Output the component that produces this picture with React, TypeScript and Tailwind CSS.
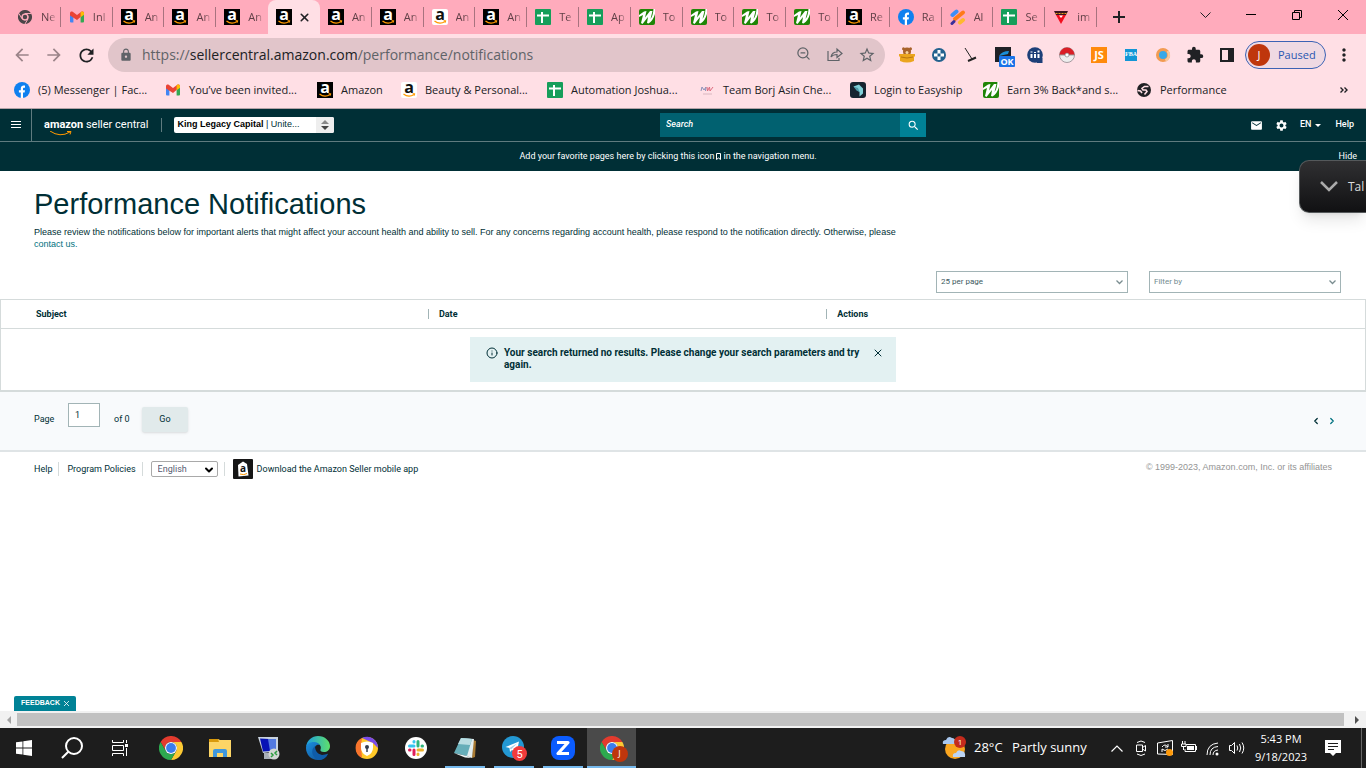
import type { ReactNode } from 'react';
import { MdLock, MdMail, MdSettings, MdRefresh, MdStarBorder, MdExtension, MdMoreVert, MdSearch, MdArrowBack, MdArrowForward } from 'react-icons/md';
import { X, ChevronDown, Info, ZoomOut } from 'lucide-react';

const AmazonIcon = ({ light = false }: { light?: boolean }) => (
  <svg viewBox="0 0 16 16" className="h-4 w-4 shrink-0">
    <rect width="16" height="16" rx={light ? 2 : 0} fill={light ? '#fff' : '#000'} />
    <text x="8" y="10.5" textAnchor="middle" fontSize="16" fontWeight="700" fontFamily="Open Sans, sans-serif" fill={light ? '#111' : '#fff'}>a</text>
    <path d="M2.5 12c3.2 2.6 7.4 2.6 10.6.5" fill="none" stroke="#f90" strokeWidth="1.3" />
    <path d="M11.6 11.7h2.2l-.6 2" fill="none" stroke="#f90" />
  </svg>
);

const ChromeIcon = ({ mono = false, className = 'h-4 w-4' }: { mono?: boolean; className?: string }) => (
  <svg viewBox="0 0 24 24" className={`${className} shrink-0`}>
    <path d="M1.6 6A12 12 0 0 1 22.4 6H12A6 6 0 0 0 6.8 15Z" fill={mono ? '#4b4548' : '#e33b2e'} />
    <path d="M22.4 6A12 12 0 0 1 12 24L17.2 15A6 6 0 0 0 12 6Z" fill={mono ? '#4b4548' : '#fcc934'} />
    <path d="M12 24A12 12 0 0 1 1.6 6L6.8 15A6 6 0 0 0 17.2 15Z" fill={mono ? '#4b4548' : '#2da94f'} />
    {mono && <path d="M12 6h10.4M6.8 15L1.6 6M17.2 15L12 24" stroke="#ffabbc" strokeWidth="1.6" />}
    <circle cx="12" cy="12" r="6" fill={mono ? '#ffabbc' : '#fff'} />
    <circle cx="12" cy="12" r={mono ? 3.8 : 4.9} fill={mono ? '#4b4548' : '#3b7ded'} />
  </svg>
);

const GmailIcon = () => (
  <svg viewBox="0 0 16 16" className="h-4 w-4 shrink-0">
    <path d="M1 4.2l3.4 2.6v6.7H2a1 1 0 0 1-1-1z" fill="#4285f4" />
    <path d="M15 4.2l-3.4 2.6v6.7H14a1 1 0 0 0 1-1z" fill="#34a853" />
    <path d="M1 6.5V4c0-1.5 1.7-2 2.7-1.2L8 6.1l4.3-3.3C13.3 2 15 2.5 15 4v1L8 11z" fill="#ea4335" />
    <path d="M11.6 3.3l.7-.5C13.3 2 15 2.5 15 4v1.7l-3.4 2.5z" fill="#fbbc04" />
  </svg>
);

const SheetIcon = () => (
  <svg viewBox="0 0 16 16" className="h-4 w-4 shrink-0">
    <rect width="16" height="16" rx="1" fill="#169e5a" />
    <path d="M7 3v11M2 6.5h12" stroke="#fff" strokeWidth="2" />
  </svg>
);

const LeafIcon = () => (
  <svg viewBox="0 0 16 16" className="h-4 w-4 shrink-0">
    <rect width="16" height="16" rx="2" fill="#1f8506" />
    <path d="M0 6L5 2.5 7.5 2 6 8.5 11 2h2.500L11.500 10Q14 7 14.500 0H16v5Q14 12 9.500 14.500L8 14 9 8 3.500 15 2 14 4 6 0 8z" fill="#fff" />
  </svg>
);

const FacebookIcon = () => (
  <svg viewBox="0 0 16 16" className="h-4 w-4 shrink-0">
    <circle cx="8" cy="8" r="8" fill="#0f80ef" />
    <path d="M6.8 16v-5.5H4.9V8.2h1.9V6.6c0-2 1.2-3 2.9-3 .7 0 1.3.1 1.3.1v2h-.9c-.9 0-1.1.6-1.1 1.1v1.4H11l-.4 2.3H9V16z" fill="#fff" />
  </svg>
);

const StripesIcon = () => (
  <svg viewBox="0 0 16 16" className="h-4 w-4 shrink-0" strokeLinecap="round">
    <path d="M2.5 6l4-3.5" stroke="#3e8ef7" strokeWidth="4" />
    <path d="M5 10l8-6.5" stroke="#ff7a1a" strokeWidth="4" />
    <path d="M10 13.5l3-2.5" stroke="#ffb82e" strokeWidth="4" />
    <path d="M2 14.5l2-2" stroke="#3a2d9a" strokeWidth="3" />
  </svg>
);

const ShieldVIcon = () => (
  <svg viewBox="0 0 16 16" className="h-4 w-4 shrink-0">
    <path d="M1 2h14l-2 4H3z" fill="#3b1620" />
    <path d="M2.5 4.5h11" stroke="#e6a11e" strokeDasharray="2 1" />
    <path d="M3 6h10L8 15z" fill="#f20d1d" />
    <path d="M6 6.5h4L8 9z" fill="#fff" />
  </svg>
);

const tabs: { icon: ReactNode; title: string; active?: boolean }[] = [
  { icon: <ChromeIcon mono className="h-3.5 w-3.5" />, title: 'Ne' },
  { icon: <GmailIcon />, title: 'Inl' },
  { icon: <AmazonIcon />, title: 'An' },
  { icon: <AmazonIcon />, title: 'An' },
  { icon: <AmazonIcon />, title: 'An' },
  { icon: <AmazonIcon />, title: '', active: true },
  { icon: <AmazonIcon />, title: 'An' },
  { icon: <AmazonIcon />, title: 'An' },
  { icon: <AmazonIcon light />, title: 'An' },
  { icon: <AmazonIcon />, title: 'An' },
  { icon: <SheetIcon />, title: 'Te' },
  { icon: <SheetIcon />, title: 'Ap' },
  { icon: <LeafIcon />, title: 'To' },
  { icon: <LeafIcon />, title: 'To' },
  { icon: <LeafIcon />, title: 'To' },
  { icon: <LeafIcon />, title: 'To' },
  { icon: <AmazonIcon />, title: 'Re' },
  { icon: <FacebookIcon />, title: 'Ra' },
  { icon: <StripesIcon />, title: 'Al' },
  { icon: <SheetIcon />, title: 'Se' },
  { icon: <ShieldVIcon />, title: 'im' },
];

const bookmarks: { icon: ReactNode; label: string; width: string }[] = [
  { icon: <FacebookIcon />, label: '(5) Messenger | Fac...', width: 'w-[151px]' },
  { icon: <GmailIcon />, label: 'You’ve been invited...', width: 'w-[152px]' },
  { icon: <AmazonIcon />, label: 'Amazon', width: 'w-[84px]' },
  { icon: <AmazonIcon light />, label: 'Beauty & Personal...', width: 'w-[146px]' },
  { icon: <SheetIcon />, label: 'Automation Joshua...', width: 'w-[152px]' },
  {
    icon: (
      <svg viewBox="0 0 16 16" className="h-4 w-4 shrink-0" fill="none">
        <path d="M2 9l1-4 2 3 2-3-.5 4" stroke="#8a90b8" />
        <path d="M8 5l.5 4 2-4 .5 4 3-4" stroke="#dc6b7d" />
        <path d="M4 12h9" stroke="#d9b7c0" />
      </svg>
    ),
    label: 'Team Borj Asin Che...',
    width: 'w-[151px]',
  },
  {
    icon: (
      <svg viewBox="0 0 16 16" className="h-4 w-4 shrink-0">
        <rect width="16" height="16" rx="3" fill="#162430" />
        <path d="M3.5 4.5L9 2.5l4 4v5l-3.5 3V10z" fill="#7fd0d8" />
        <path d="M3.5 4.5L8 6l1.5 4-3-1.5z" fill="#4e9aa8" />
      </svg>
    ),
    label: 'Login to Easyship',
    width: 'w-[133px]',
  },
  { icon: <LeafIcon />, label: 'Earn 3% Back*and s...', width: 'w-[153px]' },
  {
    icon: (
      <svg viewBox="0 0 16 16" className="h-4 w-4 shrink-0">
        <circle cx="8" cy="8" r="7" fill="#202124" />
        <path d="M12.5 4.5H8.5L6 6.5l1 1.5h3l1 1.5-2.5 3M1.5 8.5l3 .5 1.5 2" fill="none" stroke="#ffdfe5" strokeWidth="1.6" />
      </svg>
    ),
    label: 'Performance',
    width: 'w-[100px]',
  },
];

const extensions: { name: string; icon: ReactNode }[] = [
  {
    name: 'Coupons',
    icon: (
      <svg viewBox="0 0 16 16" className="h-4 w-4">
        <circle cx="8" cy="4.5" r="4" fill="#a8622a" />
        <circle cx="4.5" cy="1.8" r="1.5" fill="#a8622a" />
        <circle cx="11.5" cy="1.8" r="1.5" fill="#a8622a" />
        <path d="M0 7h16v2l-1 1v4q-7 3-14 0v-4L0 9z" fill="#eba51e" />
        <path d="M2 10q6 2 12 0" stroke="#b9760f" fill="none" />
        <circle cx="8" cy="5.5" r="1.5" fill="#f4d3a1" />
      </svg>
    ),
  },
  {
    name: 'Helper',
    icon: (
      <svg viewBox="0 0 16 16" className="h-4 w-4">
        <circle cx="8" cy="8" r="7" fill="#23628e" />
        <path d="M8 3v10M3 8h10" stroke="#fff" strokeWidth="3" />
        <rect x="6.5" y="6.5" width="3" height="3" fill="#23628e" />
      </svg>
    ),
  },
  {
    name: 'Broom',
    icon: (
      <svg viewBox="0 0 16 16" className="h-4 w-4" stroke="#222" fill="none">
        <path d="M2 1l7 11" />
        <path d="M5 14l8-3.5" strokeWidth="2" />
      </svg>
    ),
  },
  {
    name: 'Status',
    icon: (
      <svg viewBox="0 0 24 24" className="h-6 w-6">
        <rect x="4" y="4" width="16" height="15" fill="#1f2126" />
        <path d="M8 13q3-5 10-5l-1 3z" fill="#1a8fd8" />
        <rect x="8" y="13" width="16" height="11" rx="1" fill="#1a73e8" />
        <text x="16" y="22" textAnchor="middle" fontSize="9" fontWeight="700" fontFamily="Open Sans, sans-serif" fill="#fff">OK</text>
      </svg>
    ),
  },
  {
    name: 'Charts',
    icon: (
      <svg viewBox="0 0 16 16" className="h-4 w-4">
        <circle cx="8" cy="8" r="7.8" fill="#1d3f78" />
        <path d="M9 11h6.5v5H10z" fill="#1d3f78" />
        <path d="M4.500 7V11M8 7v4M11.5 7v4M4.5 4.5v1M8 5v1M11.5 3.5v2" stroke="#fff" strokeWidth="2" />
      </svg>
    ),
  },
  {
    name: 'Ball',
    icon: (
      <svg viewBox="0 0 16 16" className="h-4 w-4">
        <circle cx="8" cy="8" r="7.5" fill="#eee" stroke="#a79ba0" />
        <path d="M.5 8a7.5 7.5 0 0 1 15 0z" fill="#da1e26" />
        <path d="M.5 8h15" stroke="#999" />
        <circle cx="8" cy="8" r="2" fill="#fff" stroke="#777" strokeWidth=".6" />
      </svg>
    ),
  },
  {
    name: 'Scout',
    icon: <span className="flex h-4 w-4 items-center justify-center bg-[#ff8a0c] text-[11px] font-bold text-white">JS</span>,
  },
  {
    name: 'Calculator',
    icon: (
      <svg viewBox="0 0 12 12" className="h-3 w-3">
        <rect width="12" height="12" fill="#1296d6" />
        <text x="6" y="7" textAnchor="middle" fontSize="6" fontWeight="700" fontFamily="Liberation Serif, serif" fill="#fff">FBA</text>
      </svg>
    ),
  },
  {
    name: 'Ring',
    icon: (
      <svg viewBox="0 0 16 16" className="h-4 w-4">
        <circle cx="8" cy="8" r="5.5" fill="#36a8e8" stroke="#f29b52" strokeWidth="3" />
        <path d="M12.5 4a6 6 0 0 1-2 9.5" fill="none" stroke="#f7c79c" strokeWidth="2.5" />
      </svg>
    ),
  },
  { name: 'Extensions', icon: <MdExtension size={18} /> },
  {
    name: 'Side panel',
    icon: (
      <svg viewBox="0 0 16 16" className="h-4 w-4">
        <path d="M2 2h12v12H2z" fill="none" stroke="#202124" strokeWidth="2" />
        <path d="M9 2h5v12H9z" fill="#202124" />
      </svg>
    ),
  },
];

function TabStrip() {
  return (
    <div className="flex h-[34px] items-stretch bg-[#ffabbc]">
      <div className="ml-[9px] flex max-w-[1088px] flex-1">
        {tabs.map((tab, i) => (
          <div
            key={i}
            className={`flex min-w-0 flex-1 items-center pl-2 ${tab.active ? 'rounded-t-lg bg-[#ffdfe5]' : ''}`}
          >
            <span className="flex w-4 shrink-0 justify-center">{tab.icon}</span>
            {tab.active ? (
              <button aria-label="Close tab" className="ml-1.5 text-[#202124]">
                <X size={13} strokeWidth={3} />
              </button>
            ) : (
              <>
                <span className="ml-2 w-4 overflow-hidden text-[11px] whitespace-nowrap text-[#5f3f46] [mask-image:linear-gradient(to_right,black_50%,transparent)]">
                  {tab.title}
                </span>
                {i !== 4 && <span className="ml-auto h-5 w-px bg-[#a8737f]" />}
              </>
            )}
          </div>
        ))}
      </div>
      <button aria-label="New tab" className="flex w-[44px] items-center justify-center">
        <svg viewBox="0 0 12 12" className="h-3 w-3"><path d="M6 0v12M0 6h12" stroke="#202124" strokeWidth="2" /></svg>
      </button>
      <div className="ml-auto flex h-[29px] text-[#202124]">
        <button aria-label="Search tabs" className="flex w-[46px] items-center justify-center">
          <svg viewBox="0 0 11 6" className="h-1.5 w-[11px]" fill="none" stroke="#202124"><path d="M.5.5l5 5 5-5" /></svg>
        </button>
        <button aria-label="Minimize" className="flex w-[46px] items-center justify-center"><span className="h-px w-[10px] bg-black" /></button>
        <button aria-label="Restore" className="flex w-[46px] items-center justify-center">
          <svg viewBox="0 0 10 10" className="h-[10px] w-[10px]" fill="none" stroke="#000"><path d="M.5 2.5h7v7h-7zM2.5 2.5v-2h7v7h-2" /></svg>
        </button>
        <button aria-label="Close" className="flex w-[46px] items-center justify-center">
          <svg viewBox="0 0 10 10" className="h-[10px] w-[10px]" stroke="#000"><path d="M0 0l10 10M10 0L0 10" /></svg>
        </button>
      </div>
    </div>
  );
}

function Toolbar() {
  return (
    <div className="flex h-[42px] items-center bg-[#ffdfe5] pl-1.5 text-[#202124]">
      <button aria-label="Back" className="flex w-8 justify-center text-[#9b8489]"><MdArrowBack size={20} /></button>
      <button aria-label="Forward" className="flex w-8 justify-center text-[#9b8489]"><MdArrowForward size={20} /></button>
      <button aria-label="Reload" className="flex w-8 justify-center"><MdRefresh size={21} /></button>
      <div className="ml-1.5 flex h-[34px] flex-1 items-center rounded-full bg-[#e1c5ca] pl-[11px] text-[#5f6368]">
        <MdLock size={14} />
        <div className="ml-[9px] text-sm">
          https://<span className="text-[#202124]">sellercentral.amazon.com</span>/performance/notifications
        </div>
        <div className="ml-auto flex pr-0.5">
          <button aria-label="Zoom" className="flex w-8 justify-center"><ZoomOut size={15} strokeWidth={2} /></button>
          <button aria-label="Share" className="flex w-8 justify-center">
            <svg viewBox="0 0 16 16" className="h-4 w-4" fill="none" stroke="currentColor">
              <path d="M1 5v9.5h11V12M4 11q1-5 6-5V3l5 4.5-5 4V8.5Q6 8.5 4 11z" strokeWidth="1.2" />
            </svg>
          </button>
          <button aria-label="Bookmark" className="flex w-8 justify-center"><MdStarBorder size={18} /></button>
        </div>
      </div>
      <div className="ml-1.5 flex">
        {extensions.map((ext) => (
          <button key={ext.name} aria-label={ext.name} className="flex h-6 w-8 items-center justify-center">{ext.icon}</button>
        ))}
      </div>
      <button className="ml-0.5 flex h-7 w-[81px] items-center rounded-full border border-[#3b62b4] bg-[#efd9e3] pl-0.5 text-[11px] text-[#2a56b0]">
        <span className="flex h-[22px] w-[22px] items-center justify-center rounded-full bg-[#bf360c] text-white">J</span>
        <span className="ml-2">Paused</span>
      </button>
      <button aria-label="Menu" className="flex w-10 justify-center pr-1"><MdMoreVert size={20} /></button>
    </div>
  );
}

function BookmarksBar() {
  return (
    <nav className="flex h-[33px] items-center border-b border-[#b5a3a7] bg-[#ffdfe5] pb-1 pl-3.5 text-[11px] text-[#202124]">
      {bookmarks.map((b) => (
        <a key={b.label} href="#" className={`flex shrink-0 items-center gap-2 whitespace-nowrap ${b.width}`}>
          {b.icon}
          <span>{b.label}</span>
        </a>
      ))}
      <button aria-label="More bookmarks" className="mr-[18px] ml-auto">
        <svg viewBox="0 0 8 6" className="h-1.5 w-2" fill="none" stroke="#202124"><path d="M.5.5L3 3 .5 5.5M4.5.5L7 3 4.5 5.5" strokeWidth="1.4" /></svg>
      </button>
    </nav>
  );
}

function SellerHeader() {
  return (
    <header className="bg-[#002f36] text-[9px] text-white">
      <div className="flex h-8 items-center">
        <div className="flex h-full flex-3 items-center">
          <button aria-label="Navigation menu" className="flex h-full w-8 items-center justify-center border-r border-[#5f7b7f]">
            <svg viewBox="0 0 10 8" className="h-2 w-[10px]" stroke="#fff"><path d="M0 .5h10M0 3.5h10M0 6.5h10" /></svg>
          </button>
          <a href="#" className="ml-3 flex flex-col pt-1 text-[11px] leading-3">
            <span className="whitespace-nowrap"><b className="font-bold">amazon</b> seller central</span>
            <svg viewBox="0 0 24 5" className="ml-1.5 h-[5px] w-6" fill="none" stroke="#f90"><path d="M0 0q10 7 20 1M17 .5h4l-1 3" /></svg>
          </a>
          <span className="ml-3 h-3.5 w-px bg-[#5f7b7f]" />
          <button className="ml-3 flex h-4 w-40 items-center overflow-hidden rounded-xs bg-white text-[#002f36]">
            <span className="flex-1 pl-1 text-left font-['Liberation_Sans',sans-serif] whitespace-nowrap"><b className="text-black">King Legacy Capital</b> | Unite...</span>
            <span className="flex h-full w-[18px] items-center justify-center bg-[#eee]">
              <svg viewBox="0 0 8 10" className="h-[10px] w-2"><path d="M0 4l4-4 4 4z" fill="#888" /><path d="M0 6l4 4 4-4z" fill="#444" /></svg>
            </span>
          </button>
        </div>
        <form className="flex h-6 w-[266px] bg-[#016170]">
          <input aria-label="Search" placeholder="Search" className="min-w-0 flex-1 bg-transparent pl-1.5 font-medium italic outline-none placeholder:text-white" />
          <button type="button" aria-label="Submit search" className="flex w-[26px] items-center justify-center bg-[#008296]"><MdSearch size={13} /></button>
        </form>
        <div className="flex flex-2 items-center justify-end font-medium">
          <button aria-label="Messages"><MdMail size={13} /></button>
          <button aria-label="Settings" className="ml-3"><MdSettings size={13} /></button>
          <button className="ml-3 flex items-center gap-1">
            EN
            <svg viewBox="0 0 6 3" className="h-[3px] w-1.5"><path d="M0 0h6L3 3z" fill="#fff" /></svg>
          </button>
          <a href="#" className="mr-3 ml-3.5">Help</a>
        </div>
      </div>
      <div className="grid h-[30px] grid-cols-[1fr_auto_1fr] items-center border-t border-[#5f7b7f]">
        <p className="col-start-2 flex items-center gap-0.5 pr-[30px]">
          Add your favorite pages here by clicking this icon
          <svg viewBox="0 0 5 7" className="h-[7px] w-[5px]" fill="none" stroke="#fff"><path d="M.5.5h4v6L2.5 5 .5 6.5z" /></svg>
          in the navigation menu.
        </p>
        <button className="justify-self-end pr-[9px]">Hide</button>
      </div>
    </header>
  );
}

function PageSelect({ label, option, tone }: { label: string; option: string; tone: string }) {
  return (
    <div className="relative w-48">
      <select aria-label={label} className={`h-[22px] w-full appearance-none border border-[#a2b4b6] bg-white pl-1 text-[8px] ${tone}`}>
        <option>{option}</option>
      </select>
      <svg viewBox="0 0 7 5" className="pointer-events-none absolute top-[9px] right-[5px] h-[5px] w-[7px]" fill="none" stroke="#7a8d90">
        <path d="M.5.5l3 3 3-3" strokeWidth="1.3" />
      </svg>
    </div>
  );
}

function Notifications() {
  return (
    <main className="text-[9px] leading-3 text-[#002f36]">
      <div className="px-[34px] pt-[15px] font-['Liberation_Sans',sans-serif]">
        <h1 className="text-[29px] leading-9">Performance Notifications</h1>
        <p className="mt-1 max-w-[874px]">
          Please review the notifications below for important alerts that might affect your account health and ability to sell. For any
          concerns regarding account health, please respond to the notification directly. Otherwise, please{' '}
          <a href="#" className="text-[#017180]">contact us.</a>
        </p>
      </div>
      <div className="mt-[21px] flex justify-end gap-[21px] pr-[25px]">
        <PageSelect label="Results per page" option="25 per page" tone="text-[#3d5a60]" />
        <PageSelect label="Filter" option="Filter by" tone="text-[#728b8f]" />
      </div>
      <table className="mt-1.5 w-full table-fixed border-separate border-spacing-0 border border-b-2 border-[#d5dbdb]">
        <thead>
          <tr className="h-[29px] text-left">
            <th className="w-[31.3%] border-b border-[#d5dbdb] p-0 pl-[35px] font-bold">Subject</th>
            <th className="w-[29.2%] border-b border-[#d5dbdb] p-0">
              <div className="h-[10px] border-l border-[#a2b4b6] pl-[10px] leading-[10px]">Date</div>
            </th>
            <th className="border-b border-[#d5dbdb] p-0">
              <div className="h-[10px] border-l border-[#a2b4b6] pl-[10px] leading-[10px]">Actions</div>
            </th>
          </tr>
        </thead>
        <tbody>
          <tr>
            <td colSpan={3} className="px-0 py-2">
              <div role="alert" className="mx-auto flex h-[45px] w-[426px] items-start bg-[#e3f1f2] px-4 pt-[10px] text-[10px] leading-3 font-bold">
                <Info size={12} className="shrink-0" />
                <p className="ml-1.5 flex-1">Your search returned no results. Please change your search parameters and try again.</p>
                <button aria-label="Dismiss" className="-mr-1 ml-1"><X size={12} /></button>
              </div>
            </td>
          </tr>
        </tbody>
      </table>
      <div className="flex h-[60px] items-start justify-between border-b-2 border-[#dfe4e6] bg-[#f8fafc] pt-[11px] pr-[29px] pl-[34px]">
        <div className="flex h-8 items-center">
          <label htmlFor="page" className="w-[34px]">Page</label>
          <input id="page" defaultValue="1" className="h-6 w-8 self-start border border-[#a2b4b6] bg-white pl-1.5 text-[9px]" />
          <span className="ml-3.5 w-7">of 0</span>
          <button className="h-[25px] w-[46px] rounded-xs bg-[#e1eaeb] shadow-sm">Go</button>
        </div>
        <div className="flex h-9 items-center gap-1.5">
          <button aria-label="Previous page" className="rotate-90"><ChevronDown size={10} strokeWidth={3} /></button>
          <button aria-label="Next page" className="-rotate-90 text-[#017180]"><ChevronDown size={10} strokeWidth={3} /></button>
        </div>
      </div>
    </main>
  );
}

function SellerFooter() {
  return (
    <footer className="flex items-start justify-between px-[34px] pt-[7px] text-[9px] leading-3 text-[#002f36]">
      <div className="flex h-5 items-center">
        <a href="#">Help</a>
        <span className="mr-2 ml-1.5 h-3.5 w-px bg-[#d5dbdb]" />
        <a href="#">Program Policies</a>
        <span className="mr-2 ml-1.5 h-3.5 w-px bg-[#d5dbdb]" />
        <div className="relative w-[67px]">
          <select aria-label="Language" className="block h-4 w-full appearance-none rounded-xs border border-[#a9a9a9] bg-white pl-1.5 text-[9px] text-[#555b70]">
            <option>English</option>
          </select>
          <ChevronDown size={12} strokeWidth={4} className="pointer-events-none absolute top-[3px] right-[3px] text-black" />
        </div>
        <span className="mr-2 ml-1.5 h-3.5 w-px bg-[#d5dbdb]" />
        <a href="#" className="flex items-center gap-1">
          <svg viewBox="0 0 20 20" className="h-5 w-5">
            <rect width="20" height="20" rx="1" fill="#161616" />
            <path d="M5 6l5-3.5L14 5l1.5 11.5-10 1z" fill="#fff" />
            <text x="10" y="13" textAnchor="middle" fontSize="10" fontWeight="700" fontFamily="Open Sans, sans-serif" fill="#111">a</text>
            <path d="M7 15q4 1.5 7-.5" fill="none" stroke="#f90" />
          </svg>
          Download the Amazon Seller mobile app
        </a>
      </div>
      <p className="pt-0.5 font-['Liberation_Sans',sans-serif] text-[#949494]">© 1999-2023, Amazon.com, Inc. or its affiliates</p>
    </footer>
  );
}

const apps: { name: string; icon: ReactNode; open?: boolean; active?: boolean }[] = [
  { name: 'Chrome', icon: <ChromeIcon className="h-6 w-6" /> },
  {
    name: 'File Explorer',
    icon: (
      <svg viewBox="0 0 24 24" className="h-6 w-6">
        <path d="M1 3h9l2 1h11v17H1z" fill="#fcd566" />
        <path d="M1 3h9l1 3H1z" fill="#d99a0b" />
        <path d="M5 21v-6q0-2 2-2h10q2 0 2 2v6h-4v-4H9v4z" fill="#3f97dc" />
      </svg>
    ),
  },
  {
    name: 'Remote',
    icon: (
      <svg viewBox="0 0 24 24" className="h-6 w-6">
        <path d="M7 17h9l2 6H7z" fill="#a9b0b8" />
        <path d="M1 1h20v14L6 17z" fill="#c9d3df" />
        <path d="M3 2.5l9 .5 2 12-8 .5z" fill="#0713b5" />
        <path d="M11 3h8v11l-6 1z" fill="#5279e0" />
        <circle cx="17" cy="18" r="5.5" fill="#d3d6d3" />
        <path d="M14 17l2 2-2 2M20 15l-2 2 2 2" fill="none" stroke="#2d9c3e" strokeWidth="1.5" />
      </svg>
    ),
  },
  {
    name: 'Edge',
    icon: (
      <svg viewBox="0 0 24 24" className="h-6 w-6">
        <defs>
          <linearGradient id="edge-top" x1="0" x2="1"><stop stopColor="#1b9de2" /><stop offset="1" stopColor="#5fe06a" /></linearGradient>
          <linearGradient id="edge-low" x1="0" x2="1" y2="1"><stop stopColor="#1a8fe0" /><stop offset="1" stopColor="#114a8b" /></linearGradient>
        </defs>
        <path d="M0 11C1 4 6 0 12 0c7 0 12 5 12 10 0 4-3 6-6 6-3 0-4-1-3.5-2.5C16 10 13 7 9 7c-4 0-8 2-9 4z" fill="url(#edge-top)" />
        <path d="M0 12c0-4 4-6 8-6 3 0 5 1.5 6 3-4-1-6 2-5 5.5 1 4 7 6 13 3-2 4-6 6.5-10 6.500C5 24 0 18.5 0 12z" fill="url(#edge-low)" />
        <path d="M9 10c-5 4-3 12 4 14 4 0 7-2 9-6-6 3-13 0-13-8z" fill="#0f5ca8" />
      </svg>
    ),
  },
  {
    name: 'Secure Browser',
    icon: (
      <svg viewBox="0 0 24 24" className="h-6 w-6">
        <circle cx="12" cy="12" r="11" fill="#ffc928" />
        <path d="M7 2a11 11 0 0 1 16 10l-5-5z" fill="#7a4be8" />
        <path d="M7 2a11 11 0 0 0 0 20l-1-12z" fill="#f8742c" />
        <path d="M6 7q6-3 12 0v5q0 5-6 8-6-3-6-8z" fill="#fff" />
        <circle cx="12" cy="11" r="2" fill="#333d4d" />
        <path d="M12 11v5" stroke="#333d4d" strokeWidth="1.5" />
      </svg>
    ),
  },
  {
    name: 'Slack',
    icon: (
      <svg viewBox="0 0 24 24" className="h-6 w-6" strokeWidth="3" strokeLinecap="round">
        <circle cx="12" cy="12" r="11" fill="#fff" />
        <path d="M5.5 10H10M10 5.5V6" stroke="#36c5f0" />
        <path d="M14 5.5V10M18.5 10H18" stroke="#2eb67d" />
        <path d="M14 14h4.5M14 18.5V18" stroke="#ecb22e" />
        <path d="M10 14v4.5M5.5 14H6" stroke="#e01e5a" />
      </svg>
    ),
  },
  {
    name: 'Notepad',
    open: true,
    icon: (
      <svg viewBox="0 0 24 24" className="h-6 w-6">
        <path d="M20 4l3 1-1 16-3 1z" fill="#a87a33" />
        <path d="M8 2l13 1-2 19-6-2z" fill="#e4eef0" />
        <path d="M8 2l11 1-5 17L1 17z" fill="#66aeb9" />
        <path d="M8 2l11 1-2 6L5 8z" fill="#b9dde2" />
        <path d="M1 17l13 3 4 2-6-.5z" fill="#eef5f6" />
      </svg>
    ),
  },
  {
    name: 'Telegram',
    open: true,
    icon: (
      <svg viewBox="0 0 26 26" className="h-[26px] w-[26px]">
        <circle cx="12" cy="12" r="11" fill="#2398d3" />
        <path d="M4.5 12L18 6.5 15.5 18 11 15l-2 2-.5-4z" fill="#fff" />
        <path d="M8.5 13L16 8.5 10 14.5z" fill="#a9cfe6" />
        <circle cx="18.5" cy="18.5" r="7.5" fill="#f23b3b" />
        <text x="18.5" y="22.5" textAnchor="middle" fontSize="11" fontFamily="Roboto, sans-serif" fill="#fff">5</text>
      </svg>
    ),
  },
  {
    name: 'Zoom',
    open: true,
    icon: (
      <svg viewBox="0 0 24 24" className="h-6 w-6">
        <rect width="24" height="24" rx="8" fill="#0b5cff" />
        <path d="M6 6.5h11L7 17.5h11" fill="none" stroke="#fff" strokeWidth="3.2" strokeLinejoin="round" />
      </svg>
    ),
  },
  {
    name: 'Chrome profile',
    open: true,
    active: true,
    icon: (
      <span className="relative">
        <ChromeIcon className="h-6 w-6" />
        <span className="absolute -right-1 -bottom-0.5 flex h-4 w-4 items-center justify-center rounded-full bg-[#bf360c] text-[9px] text-white">J</span>
      </span>
    ),
  },
];

function Taskbar() {
  return (
    <div className="flex h-10 items-stretch bg-[#1d1d1d] text-white">
      <button aria-label="Start" className="flex w-12 items-center justify-center">
        <svg viewBox="0 0 16 16" className="h-4 w-4" fill="#fff"><path d="M0 2.3L6.5 1.4v6.2H0zM7.3 1.3L16 0v7.6H7.3zM0 8.4h6.5v6.2L0 13.7zM7.3 8.4H16V16l-8.7-1.3z" /></svg>
      </button>
      <button aria-label="Search" className="flex w-12 items-center justify-center">
        <svg viewBox="0 0 22 22" className="h-[22px] w-[22px]" fill="none" stroke="#fff" strokeWidth="2"><circle cx="13" cy="9" r="8" /><path d="M7.3 14.7L1 21" /></svg>
      </button>
      <button aria-label="Task view" className="mr-0.5 flex w-12 items-center justify-center">
        <svg viewBox="0 0 16 16" className="h-4 w-4" fill="none" stroke="#fff"><path d="M.5 0v2.5h11V0M.5 5.5h11v5H.5zM.5 16v-2.5h11V16M14.5 0v3M14.5 8v8" /><path d="M13 4h3v3h-3z" fill="#fff" stroke="none" /></svg>
      </button>
      {apps.map((app) => (
        <button key={app.name} aria-label={app.name} className={`flex w-[49px] flex-col items-center ${app.active ? 'bg-[#4a4a4a]' : ''}`}>
          <span className="flex flex-1 items-center pt-px">{app.icon}</span>
          <span className={`h-0.5 ${app.active ? 'w-full' : 'w-10'} ${app.open ? 'bg-[#76b9ed]' : ''}`} />
        </button>
      ))}
      <div className="ml-auto flex items-center">
        <button className="flex items-center text-[13px]">
          <svg viewBox="0 0 24 24" className="mr-2 h-6 w-6">
            <circle cx="13" cy="13" r="10" fill="#f9a51f" />
            <path d="M1 8q-1-4 3-4 2-5 6-2 4 0 3 6z" fill="#a9c7ee" />
            <path d="M11 21q-1-4 3-4 2-4 5-2 5 0 4 6z" fill="#bcd4f3" />
            <circle cx="18" cy="6" r="6" fill="#c42b1c" />
            <text x="18" y="9" textAnchor="middle" fontSize="8" fill="#fff">1</text>
          </svg>
          <span className="w-[38px] text-left">28°C</span>
          <span className="w-[93px] text-left whitespace-nowrap">Partly sunny</span>
        </button>
        <button aria-label="Show hidden icons" className="flex w-6 justify-center">
          <svg viewBox="0 0 12 7" className="h-[7px] w-3" fill="none" stroke="#fff" strokeWidth="1.2"><path d="M.5 6.5L6 1l5.5 5.5" /></svg>
        </button>
        <button aria-label="Meet now" className="flex w-6 justify-center">
          <svg viewBox="0 0 16 16" className="h-4 w-4" fill="none" stroke="#fff"><path d="M3.5 5h6v6.5h-6zM9.5 7.5l3-2V11l-3-2M4 2.5q4-3 8 0M4 14q4 3 8 0" /></svg>
        </button>
        <button aria-label="Updates" className="flex w-6 justify-center">
          <svg viewBox="0 0 16 16" className="h-4 w-4" fill="none" stroke="#fff"><path d="M.5 3l15-2.5v14L.5 14zM5 7q3-4 6 0M11 4v3H8M11 9q-3 3-6 0M5 12V9" /><circle cx="12.5" cy="12.5" r="3.5" fill="#ff9a0a" stroke="none" /></svg>
        </button>
        <button aria-label="Battery" className="flex w-6 justify-center">
          <svg viewBox="0 0 16 16" className="h-4 w-4" fill="none" stroke="#fff"><path d="M5 4.5h9.5v7H4V9M1.5 1v3M4 1v3M.5 4H5v2.5H.5zM2.5 6.5V10" /><path d="M6 6h7v4H6zM15 6h1v4h-1z" fill="#fff" stroke="none" /></svg>
        </button>
        <button aria-label="Network" className="flex w-6 justify-center">
          <svg viewBox="0 0 16 16" className="h-4 w-4" fill="none" stroke="#fff"><path d="M2 15Q2 4 13 3M5 15Q5 7 13 6.5M8 15q0-4.5 5-5" /><circle cx="12" cy="14" r="1.5" fill="#fff" stroke="none" /></svg>
        </button>
        <button aria-label="Volume" className="flex w-6 justify-center">
          <svg viewBox="0 0 16 16" className="h-4 w-4" fill="none" stroke="#fff"><path d="M.5 5.5h2l3-3v11l-3-3h-2zM8 5.5q1.5 2.5 0 5M10.5 4q2.5 4 0 8M13 2.5q3.5 5.5 0 11" /></svg>
        </button>
        <div className="w-16 text-center text-[11px] leading-[18px]">
          <div>5:43 PM</div>
          <div>9/18/2023</div>
        </div>
        <button aria-label="Notifications" className="flex w-10 justify-center">
          <svg viewBox="0 0 16 16" className="h-4 w-4"><path d="M0 0h16v13h-5l-3 3-3-3H0z" fill="#fff" /><path d="M3 3.5h10M3 6.5h10M3 9.5h6" stroke="#1d1d1d" /></svg>
        </button>
        <span className="mr-1 ml-2 h-10 w-px bg-[#666]" />
      </div>
    </div>
  );
}

export default function App() {
  return (
    <div className="relative flex min-h-screen flex-col overflow-hidden bg-white font-['Open_Sans',sans-serif]">
      <TabStrip />
      <Toolbar />
      <BookmarksBar />
      <div className="flex flex-1 flex-col font-['Roboto',sans-serif]">
        <SellerHeader />
        <Notifications />
        <SellerFooter />
        <div className="mt-auto pl-3.5">
          <button className="flex h-[15px] w-[62px] items-center justify-center gap-1 rounded-t-xs bg-[#008296] font-['Liberation_Sans',sans-serif] text-[7px] font-bold text-white">
            FEEDBACK
            <svg viewBox="0 0 5 5" className="h-[5px] w-[5px]" stroke="#fff"><path d="M0 0l5 5M5 0L0 5" strokeWidth=".8" /></svg>
          </button>
        </div>
      </div>
      <div className="flex h-[17px] items-center bg-[#f1f1f1]">
        <span className="flex w-[17px] justify-center"><svg viewBox="0 0 4 8" className="h-2 w-1"><path d="M4 0v8L0 4z" fill="#a3a3a3" /></svg></span>
        <span className="h-[13px] flex-1 bg-[#c1c1c1]" />
        <span className="flex w-[22px] justify-center pl-1"><svg viewBox="0 0 4 8" className="h-2 w-1"><path d="M0 0v8l4-4z" fill="#505050" /></svg></span>
      </div>
      <Taskbar />
      <div className="absolute top-[160px] right-0 flex h-[53px] w-[67px] items-center overflow-hidden rounded-l-[10px] border border-r-0 border-[#55595b] bg-linear-to-b from-[#303032] to-[#111113] pl-5 text-xs text-[#ddd] shadow-lg">
        <svg viewBox="0 0 18 11" className="mr-[10px] h-[11px] w-[18px] shrink-0" fill="none" stroke="#aaa" strokeWidth="2.5"><path d="M1 1l8 8 8-8" /></svg>
        Tal
      </div>
    </div>
  );
}
